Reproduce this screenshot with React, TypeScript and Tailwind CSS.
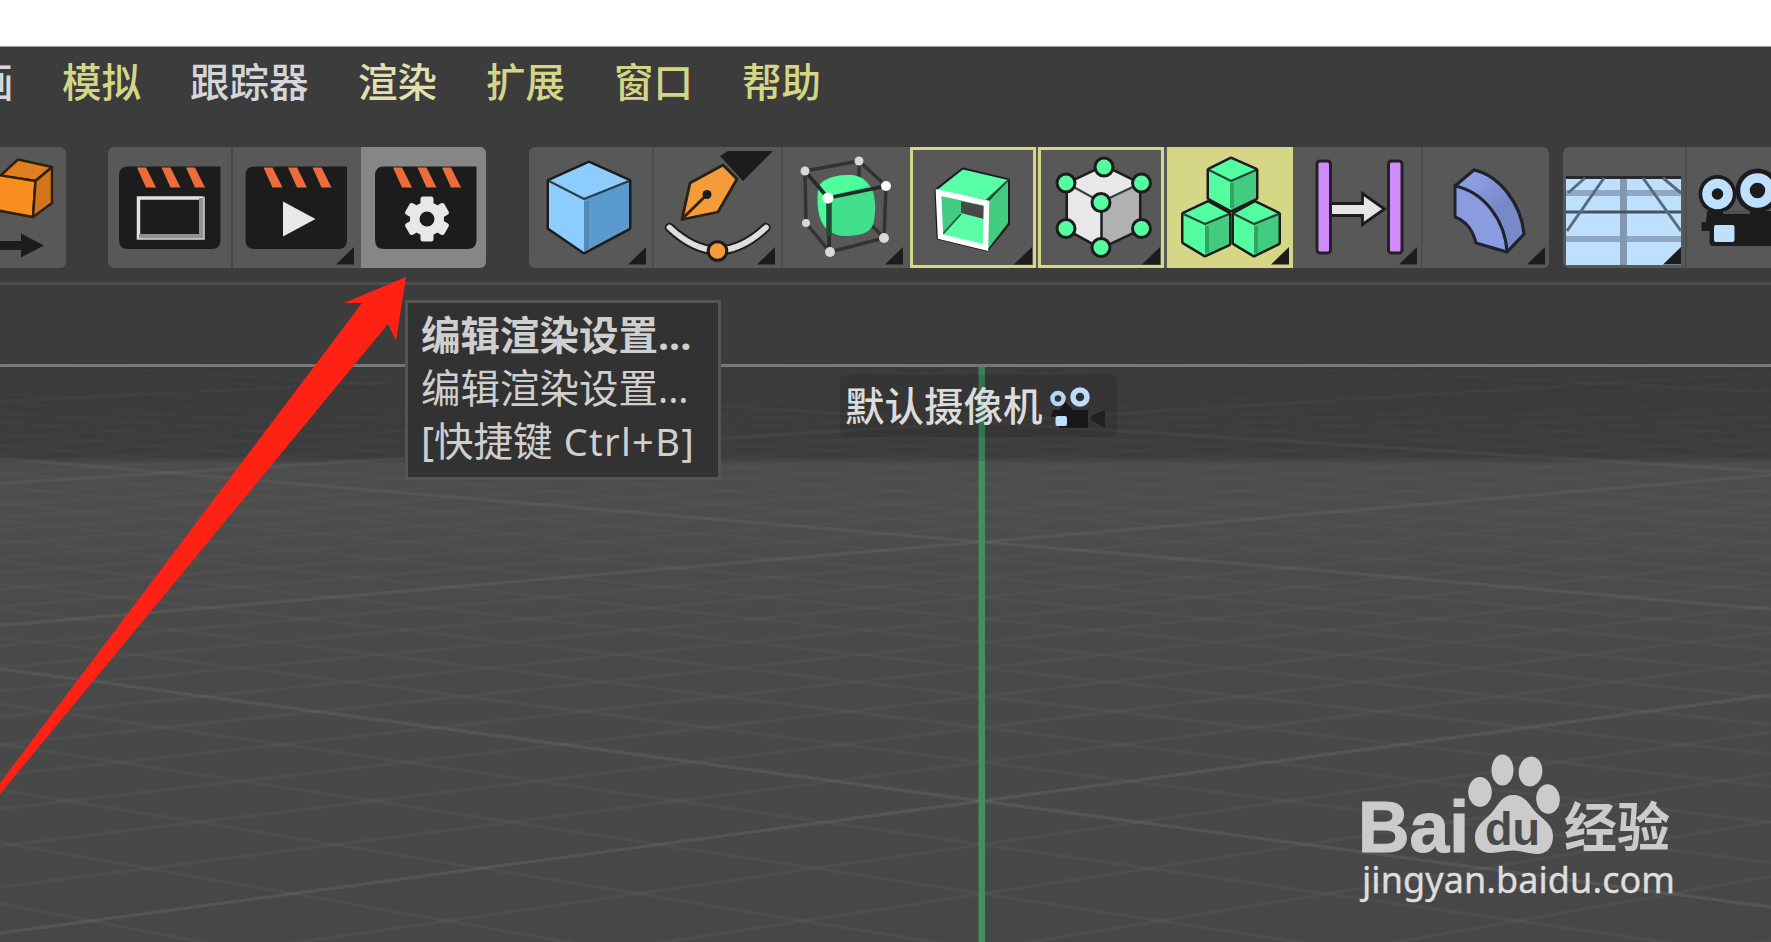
import React from "react";

type Pt = [number, number];
const pts = (p: Pt[]) => p.map((q) => q.join(",")).join(" ");

const INK = "#1c1c1c";

const menu = [
  { label: "画", className: "w-[88px] -ml-[26px] text-[#d8d8dc]" },
  { label: "模拟", className: "w-[128px] text-[#d4d685]" },
  { label: "跟踪器", className: "w-[168px] text-[#d6d6da]" },
  { label: "渲染", className: "w-[128px] text-[#e2e0b0]" },
  { label: "扩展", className: "w-[128px] text-[#d4d685]" },
  { label: "窗口", className: "w-[128px] text-[#d4d685]" },
  { label: "帮助", className: "w-[128px] text-[#d4d685]" },
];

/* Every toolbar cell draws in the coordinate space of the whole bar. */
function Cell({
  x,
  w,
  className = "",
  corner,
  children,
}: {
  x: number;
  w: number;
  className?: string;
  corner?: number;
  children: React.ReactNode;
}) {
  return (
    <div className={`h-[121px] shrink-0 overflow-hidden ${className}`}>
      <svg width={w} height={121} viewBox={`${x} 147 ${w} 121`} className="block">
        {children}
        {corner !== undefined && (
          <polygon points={`${corner},247 ${corner},264.5 ${corner - 18},264.5`} fill={INK} />
        )}
      </svg>
    </div>
  );
}

function Clapper({ x }: { x: number }) {
  return (
    <g>
      <path d={`M${x + 9} 166.500H${x + 101.500}V240q0 9-9 9H${x + 9}q-9 0-9-9V175.500q0-9 9-9z`} fill={INK} />
      {[18, 42.5, 67].map((o) => (
        <polygon
          key={o}
          points={`${x + o},167.500 ${x + o + 9},167.500 ${x + o + 19},187.500 ${x + o + 9},187.500`}
          fill="#ee6b3b"
        />
      ))}
    </g>
  );
}

function Cube({ t, r, rb, b, lb, l, c, colors }: { t: Pt; r: Pt; rb: Pt; b: Pt; lb: Pt; l: Pt; c: Pt; colors: [string, string, string] }) {
  return (
    <g strokeLinejoin="round">
      <polygon points={pts([t, r, rb, b, lb, l])} fill={INK} stroke={INK} strokeWidth="5" />
      <polygon points={pts([t, r, c, l])} fill={colors[0]} />
      <polygon points={pts([l, c, b, lb])} fill={colors[1]} />
      <polygon points={pts([c, r, rb, b])} fill={colors[2]} />
      <polyline points={pts([l, c, r])} fill="none" stroke="#1c2c2c" strokeOpacity=".85" strokeWidth="2.2" />
    </g>
  );
}

function Gear({ cx, cy }: { cx: number; cy: number }) {
  return (
    <g transform={`translate(${cx} ${cy})`}>
      {[0, 60, 120, 180, 240, 300].map((a) => (
        <rect key={a} x="-6.500" y="-22.500" width="13" height="14" rx="2.500" fill="#e8e8e8" transform={`rotate(${a})`} />
      ))}
      <circle r="17" fill="#e8e8e8" />
      <circle r="7.500" fill={INK} />
    </g>
  );
}

const greens: [string, string, string] = ["#54fd9f", "#54fd9f", "#43cb80"];

function Toolbar() {
  const cage: [Pt, Pt][] = [
    [[805, 171], [859, 161]],
    [[859, 161], [886, 186]],
    [[805, 171], [806, 223]],
    [[806, 223], [830, 252]],
    [[830, 252], [884, 238]],
    [[886, 186], [884, 238]],
    [[859, 161], [859, 212]],
    [[859, 212], [884, 238]],
  ];
  const nodes: [number, number, number][] = [
    [805, 171, 4.5],
    [859, 161, 4.5],
    [886, 186, 5],
    [828, 198, 5.5],
    [806, 223, 4],
    [884, 238, 5],
    [830, 252, 5],
  ];
  const dots: Pt[] = [
    [1104, 167],
    [1066, 183],
    [1141.5, 183],
    [1101, 202.5],
    [1066, 228.5],
    [1141.5, 228.5],
    [1101, 247.5],
  ];
  return (
    <div className="flex h-[121px] w-full shrink-0 overflow-hidden">
      <div className="mr-[42px] flex shrink-0 overflow-hidden rounded-r-[6px] bg-[#585858]">
        <Cell x={0} w={66}>
          <g stroke="#33200c" strokeWidth="2.500" strokeLinejoin="round">
            <polygon points="0,176 18,159.500 52,167 35.500,181" fill="#df7f1f" />
            <polygon points="-2,175 35.500,181 33,217 -2,210.500" fill="#f78e1e" />
            <polygon points="35.500,181 52,167 52,203 33,217" fill="#d0771b" />
          </g>
          <path d="M0 241H21V233.500L44 245.500L21 257.500V250H0z" fill={INK} />
        </Cell>
      </div>

      <div className="mr-[43px] flex shrink-0 overflow-hidden rounded-[6px] bg-[#585858]">
        <Cell x={108} w={123}>
          <Clapper x={119} />
          <path d="M138.500 239V198H203" fill="none" stroke="#e2e2e2" strokeWidth="3.500" />
          <path d="M201.500 198V236.500H139" fill="none" stroke="#919191" strokeWidth="5" />
          <path d="M136.750 239H204V196.500" fill="none" stroke="#cfcfcf" strokeWidth="1.500" />
        </Cell>
        <Cell x={233} w={128} corner={354} className="border-l-[2px] border-[#4a4a4a]">
          <Clapper x={245.5} />
          <polygon points="283,201.500 315.500,219 283,236.500" fill="#e8e8e8" />
        </Cell>
        <Cell x={361} w={125} className="bg-[#868686]">
          <Clapper x={375} />
          <Gear cx={427} cy={219} />
        </Cell>
      </div>

      <div className="mr-[14px] flex w-[1020px] shrink-0 overflow-hidden rounded-[6px] bg-[#585858]">
        <Cell x={529} w={123} corner={646}>
          <Cube t={[589, 163]} r={[629, 181]} rb={[629, 228]} b={[584, 252]} lb={[549, 228]} l={[549, 181]} c={[584, 199]} colors={["#8dccff", "#8dccff", "#5b9ace"]} />
          <path d="M586.500 201V250" stroke="#5589b5" strokeWidth="5" />
        </Cell>
        <Cell x={654} w={127} corner={775} className="border-l-[2px] border-[#4d4d4d]">
          <g strokeLinejoin="round" strokeLinecap="round">
            <polygon points="720,156 728,151 773,151 743,181" fill={INK} />
            <polygon points="682,219.500 690,183 723,165 737,179 718,212" fill="#f49c3a" stroke="#292018" strokeWidth="2.800" />
            <path d="M682.500 218.500L707 194.500" stroke="#3a240d" strokeWidth="3" />
            <circle cx="707" cy="194.500" r="4.500" fill={INK} />
            <path d="M669.500 227.500Q717.500 273 766 227.500" fill="none" stroke={INK} strokeWidth="9.500" />
            <path d="M669.500 227.500Q717.500 273 766 227.500" fill="none" stroke="#dedede" strokeWidth="5.800" />
            <circle cx="717.500" cy="251" r="9.300" fill="#f49c3a" stroke={INK} strokeWidth="3" />
          </g>
        </Cell>
        <Cell x={783} w={126} corner={903} className="border-l-[2px] border-[#4d4d4d]">
          {cage.map(([a, b], i) => (
            <path key={i} d={`M${a}L${b}`} stroke="#333333" strokeWidth="3.500" />
          ))}
          <path d="M818 190C818 180 834 175 849 175C861 175 866 180 870 186C876 194 876 210 874 221C872 232 864 235 848 236C832 237 823 228 820 218C817 209 817 197 818 190z" fill="#42e08c" />
          <path d="M820 186C824 178 838 175 849 175C860 175 865 180 868 186L829 196z" fill="#4efd9c" />
          <path d="M819 190L826 198V228C818 217 817 203 819 190z" fill="#50f89d" />
          <path d="M805 171L828 198L886 186" fill="none" stroke="#252b28" strokeWidth="3.800" />
          <path d="M829 198V236" stroke="#1e4f36" strokeWidth="5.500" />
          <path d="M829 236V252" stroke="#2c2c2c" strokeWidth="4" />
          {nodes.map(([x, y, s], i) => (
            <circle key={i} cx={x} cy={y} r={s} fill={i === 2 || i === 3 ? "#ffffff" : "#d8d8d8"} />
          ))}
        </Cell>
        <Cell x={910} w={125.5} corner={1032} className="ml-px outline-[3px] -outline-offset-[3px] outline-[#d5d787]">
          <g strokeLinejoin="round">
            <polygon points="936,190 963,169 1008.500,180 1008.500,224 987,250 938,238" fill={INK} stroke={INK} strokeWidth="3" />
            <polygon points="937,190 963,169.500 1008,180 986,200" fill="#59ffa6" />
            <polygon points="988,202 1008,181 1008,223 988,249" fill="#43cb80" />
            <path d="M986 201L1008.500 180" stroke="#23563b" strokeWidth="2" />
            <polygon points="938,192 987,203 986,248 940,237" fill="#59ffa6" />
            <polygon points="941,195 961,200 961,214 942,234" fill="#43cb80" />
            <polygon points="961,201 984,206 984,219 961,213" fill="#484848" />
            <path d="M961 214L942 235" stroke="#23563b" strokeWidth="1.800" />
            <polygon points="938.500,192.500 986.500,203 985.500,247.500 940.500,236.500" fill="none" stroke="#ffffff" strokeWidth="5.500" strokeLinejoin="miter" />
          </g>
        </Cell>
        <Cell x={1038} w={126} corner={1160} className="ml-[2.5px] outline-[3px] -outline-offset-[3px] outline-[#d5d787]">
          <Cube t={[1104, 167]} r={[1139, 184]} rb={[1139, 229]} b={[1101, 247]} lb={[1068, 229]} l={[1068, 184]} c={[1101, 202]} colors={["#e8e8e8", "#e8e8e8", "#b1b1b1"]} />
          <path d="M1101.500 202V247" stroke={INK} strokeWidth="2.500" />
          {dots.map(([x, y]) => (
            <circle key={`${x}-${y}`} cx={x} cy={y} r="9" fill="#54fd9f" stroke={INK} strokeWidth="3" />
          ))}
        </Cell>
        <Cell x={1167} w={125.5} corner={1289} className="ml-[3px] bg-[#d5d787]">
          <Cube t={[1231, 159]} r={[1256, 170]} rb={[1256, 198]} b={[1231, 210]} lb={[1209, 198]} l={[1209, 170]} c={[1231, 181]} colors={greens} />
          <Cube t={[1208, 202.5]} r={[1229, 214]} rb={[1229, 244]} b={[1205, 255]} lb={[1183.5, 242]} l={[1183.5, 214]} c={[1205, 224]} colors={greens} />
          <Cube t={[1255, 202.5]} r={[1278.5, 214]} rb={[1278.5, 243]} b={[1254, 255]} lb={[1234, 243]} l={[1234, 214]} c={[1254, 224]} colors={greens} />
          <path d="M1232 183V208M1207 226V253M1256 226V253" stroke="#2fa566" strokeWidth="4" />
        </Cell>
        <Cell x={1294} w={127} corner={1417} className="ml-[1.5px]">
          <g fill="#cf8cff" stroke="#242026" strokeWidth="3">
            <rect x="1317" y="161" width="13.500" height="92" rx="3" />
            <rect x="1388.500" y="161" width="13.500" height="92" rx="3" />
          </g>
          <path d="M1332 203.500H1362.500V193.500L1384.500 209L1362.500 224.500V215.500H1332" fill="#e6e6e6" stroke={INK} strokeWidth="2.800" />
        </Cell>
        <Cell x={1423} w={126} corner={1545} className="border-l-[2px] border-[#4d4d4d]">
          <g stroke="#20222c" strokeWidth="3" strokeLinejoin="round">
            <path d="M1455 186L1474 170C1500 176 1521 204 1524 234L1507 252L1476 243C1473 231 1466 221 1455 217z" fill="#8b9be0" />
            <path d="M1455 186L1474 170C1500 176 1521 204 1524 234L1507 252C1505 220 1484 192 1455 186z" fill="url(#bendShade)" />
          </g>
          <defs>
            <linearGradient id="bendShade" x1="0" y1="0" x2="0.8" y2="1">
              <stop offset="0.2" stopColor="#8d9de4" />
              <stop offset="0.6" stopColor="#7888c8" />
            </linearGradient>
          </defs>
        </Cell>
      </div>

      <div className="flex shrink-0 overflow-hidden rounded-l-[6px] bg-[#585858]">
        <Cell x={1563} w={122} corner={1681}>
          <rect x="1566" y="178" width="115" height="87" fill="#bfdfff" />
          <path d="M1566 193H1681M1566 239H1681" stroke="#8fa8c1" strokeWidth="6" />
          <path d="M1623.500 178V265" stroke="#8198ae" strokeWidth="7" />
          <path d="M1566 177.500H1681" stroke="#25292d" strokeWidth="3" />
          <path d="M1566 212H1681" stroke="#46535f" strokeWidth="2.800" />
          <path d="M1604 178L1567 231M1643 178L1681 231M1585 178L1568 193M1663 178L1681 193" stroke="#5a6a79" strokeWidth="3" fill="none" />
        </Cell>
        <Cell x={1687} w={84} className="border-l-[2px] border-[#4d4d4d]">
          <g fill={INK}>
            <circle cx="1717.500" cy="194" r="19" />
            <circle cx="1757.500" cy="190.500" r="22" />
            <path d="M1707 211H1771V246H1713Q1709.500 246 1709.500 242V231H1701.500V222H1706z" />
          </g>
          <path d="M1723 212.500H1750" stroke="#585858" strokeWidth="2.500" />
          <g fill={INK} stroke="#bfdfff" strokeWidth="9.500">
            <circle cx="1717.500" cy="194" r="10.500" />
            <circle cx="1757.500" cy="190.500" r="12.500" />
          </g>
          <rect x="1714" y="225" width="20.500" height="17" rx="2" fill="#bfdfff" />
        </Cell>
      </div>
    </div>
  );
}

/* Perspective floor: two line families, each running to its own vanishing point. */
const AXIS_X = 982;
const VP_Y = 97;
const VP_DX = 5232;
const floorLines = Array.from({ length: 46 }, (_, i) => i - 9).map((n) => ({
  n,
  major: n % 10 === 0,
  y: 1 / (0.0014205 + n * 0.0000827),
}));

function Floor() {
  const lineY = (y: number, dx: number) => VP_Y + y * (1 + dx / VP_DX);
  return (
    <svg width="1771" height="575" viewBox="0 367 1771 575" className="absolute inset-0 block">
      <defs>
        <linearGradient id="minorFade" gradientUnits="userSpaceOnUse" x1="0" y1="367" x2="0" y2="942">
          <stop offset="0" stopColor="#fff" stopOpacity="0.004" />
          <stop offset="0.16" stopColor="#fff" stopOpacity="0.012" />
          <stop offset="0.45" stopColor="#fff" stopOpacity="0.024" />
          <stop offset="1" stopColor="#fff" stopOpacity="0.036" />
        </linearGradient>
        <linearGradient id="majorFade" gradientUnits="userSpaceOnUse" x1="0" y1="367" x2="0" y2="942">
          <stop offset="0" stopColor="#fff" stopOpacity="0.01" />
          <stop offset="0.16" stopColor="#fff" stopOpacity="0.045" />
          <stop offset="0.45" stopColor="#fff" stopOpacity="0.065" />
          <stop offset="1" stopColor="#fff" stopOpacity="0.075" />
        </linearGradient>
      </defs>
      {floorLines.map(({ n, major, y }) => {
        const a = lineY(y, -AXIS_X);
        const b = lineY(y, 1771 - AXIS_X);
        const c = lineY(y, AXIS_X);
        const d = lineY(y, AXIS_X - 1771);
        const stroke = major ? "url(#majorFade)" : "url(#minorFade)";
        return (
          <g key={n} stroke={stroke} strokeWidth={3.2} fill="none">
            <path d={`M0 ${a}L1771 ${b}`} />
            <path d={`M0 ${c}L1771 ${d}`} />
          </g>
        );
      })}
      <rect x="978.500" y="367" width="6.500" height="94" fill="#3a7e55" />
      <rect x="978.500" y="461" width="6.500" height="481" fill="#438f5f" />
    </svg>
  );
}

function SmallCamera() {
  return (
    <svg width="60" height="44" viewBox="1050 386 60 44" className="mt-[3px] ml-[6px] block shrink-0">
      <path d="M1054 410H1089V428H1060V417H1052z" fill="#171717" />
      <path d="M1066 402L1075 411H1060z" fill="#171717" />
      <path d="M1106 410V428L1092 420V416z" fill="#202020" />
      <circle cx="1059" cy="398.500" r="5.500" fill="#2c3136" stroke="#b7d6f3" strokeWidth="4.500" />
      <circle cx="1081" cy="397" r="7" fill="#2c3136" stroke="#bcdcfb" strokeWidth="5.500" />
      <rect x="1056.500" y="416" width="11.500" height="10" rx="2" fill="#bcdfff" />
    </svg>
  );
}

function Watermark() {
  return (
    <svg width="340" height="170" viewBox="1350 745 340 170" className="absolute top-[378px] left-[1350px] block">
      <g fill="#cbcbcb">
        <text x="1358" y="851.500" fontSize="72" fontWeight="700" fontFamily="Liberation Sans, Arial, sans-serif" textLength="111" lengthAdjust="spacingAndGlyphs" stroke="#cbcbcb" strokeWidth="1.200">
          Bai
        </text>
        <ellipse cx="1480" cy="792" rx="11.800" ry="15" />
        <ellipse cx="1502.500" cy="770" rx="11" ry="15.500" />
        <ellipse cx="1530.500" cy="771.500" rx="11.800" ry="15" transform="rotate(8 1530.500 771.500)" />
        <ellipse cx="1548" cy="799" rx="11.800" ry="14.800" transform="rotate(-4 1548 799)" />
        <path d="M1513 795C1503 795 1499 803 1493 811C1486 820 1475 824 1475 838C1475 848 1482 853 1491 853C1499 853 1505 850.500 1513 850.500C1521 850.500 1528 854 1537 854C1547 854 1553 847 1553 836C1553 823 1541 819 1533 809C1527 801 1523 795 1513 795z" />
        <text x="1564" y="847" fontSize="53" fontWeight="700" fontFamily="Noto Sans CJK SC, sans-serif" textLength="106" lengthAdjust="spacingAndGlyphs">
          经验
        </text>
      </g>
      <text x="1485" y="844.500" fontSize="46" fontWeight="700" fill="#494949" fontFamily="Liberation Sans, Arial, sans-serif" textLength="55" lengthAdjust="spacingAndGlyphs">
        du
      </text>
      <text x="1362" y="893" fontSize="36" fontWeight="400" fill="#dedede" stroke="#dedede" strokeWidth=".4" fontFamily="Noto Sans, sans-serif" textLength="313" lengthAdjust="spacing">
        jingyan.baidu.com
      </text>
    </svg>
  );
}

export default function App() {
  return (
    <div className="relative flex h-[942px] w-[1771px] flex-col overflow-hidden bg-[#3c3c3c] font-['Noto_Sans_CJK_SC','Noto_Sans',sans-serif]">
      <div className="h-[47px] shrink-0 border-b border-[#9a9a9a] bg-white" />

      <nav className="flex h-[100px] shrink-0 pt-[8px] text-[39.5px] leading-[50px] font-medium">
        {menu.map((m) => (
          <div key={m.label} className={`shrink-0 whitespace-nowrap ${m.className}`}>
            {m.label}
          </div>
        ))}
      </nav>

      <Toolbar />

      <div className="mt-[14px] h-[3px] shrink-0 bg-[#4f4f4f]" />
      <div className="h-[79px] shrink-0" />
      <div className="h-[3px] shrink-0 bg-[#777777]" />

      <main className="relative flex h-[575px] shrink-0 justify-center overflow-hidden bg-[linear-gradient(to_bottom,#3a3a3a_0,#3c3c3c_90px,#4c4c4c_97px,#4d4d4d_130px,#494949_300px,#474747_575px)]">
        <Floor />
        <div className="relative mt-[8px] ml-[186px] flex h-[62px] w-[277px] items-center rounded-[6px] bg-black/10 pl-[5px] text-[39.5px] leading-[50px] font-medium whitespace-nowrap text-[#dcdcdc]">
          <span className="-mt-[4px]">默认摄像机</span>
          <SmallCamera />
        </div>
        <Watermark />
      </main>

      <div className="absolute top-[300px] left-[405px] flex h-[180px] w-[316px] flex-col border-[3px] border-[#545454] bg-[#323232] pt-[3px] pl-[13px] text-[39.5px] leading-[53px] whitespace-nowrap text-[#cfcfcf]">
        <div className="h-[53px] font-bold">
          编辑渲染设置<span className="font-['Noto_Sans'] leading-none">...</span>
        </div>
        <div className="h-[53px]">
          编辑渲染设置<span className="font-['Noto_Sans'] text-[38px] leading-none">...</span>
        </div>
        <div className="h-[53px]">
          <span className="font-['Noto_Sans'] leading-none">[</span>快捷键
          <span className="font-['Noto_Sans'] text-[38px] leading-none tracking-[1.3px] whitespace-pre"> Ctrl+B]</span>
        </div>
      </div>

      <svg width="420" height="540" viewBox="0 270 420 540" className="absolute top-[270px] left-0 block">
        <polygon points="406,277 344,303 362,303 0,783 0,794 388,324 396,341" fill="#ff2113" />
      </svg>
    </div>
  );
}
